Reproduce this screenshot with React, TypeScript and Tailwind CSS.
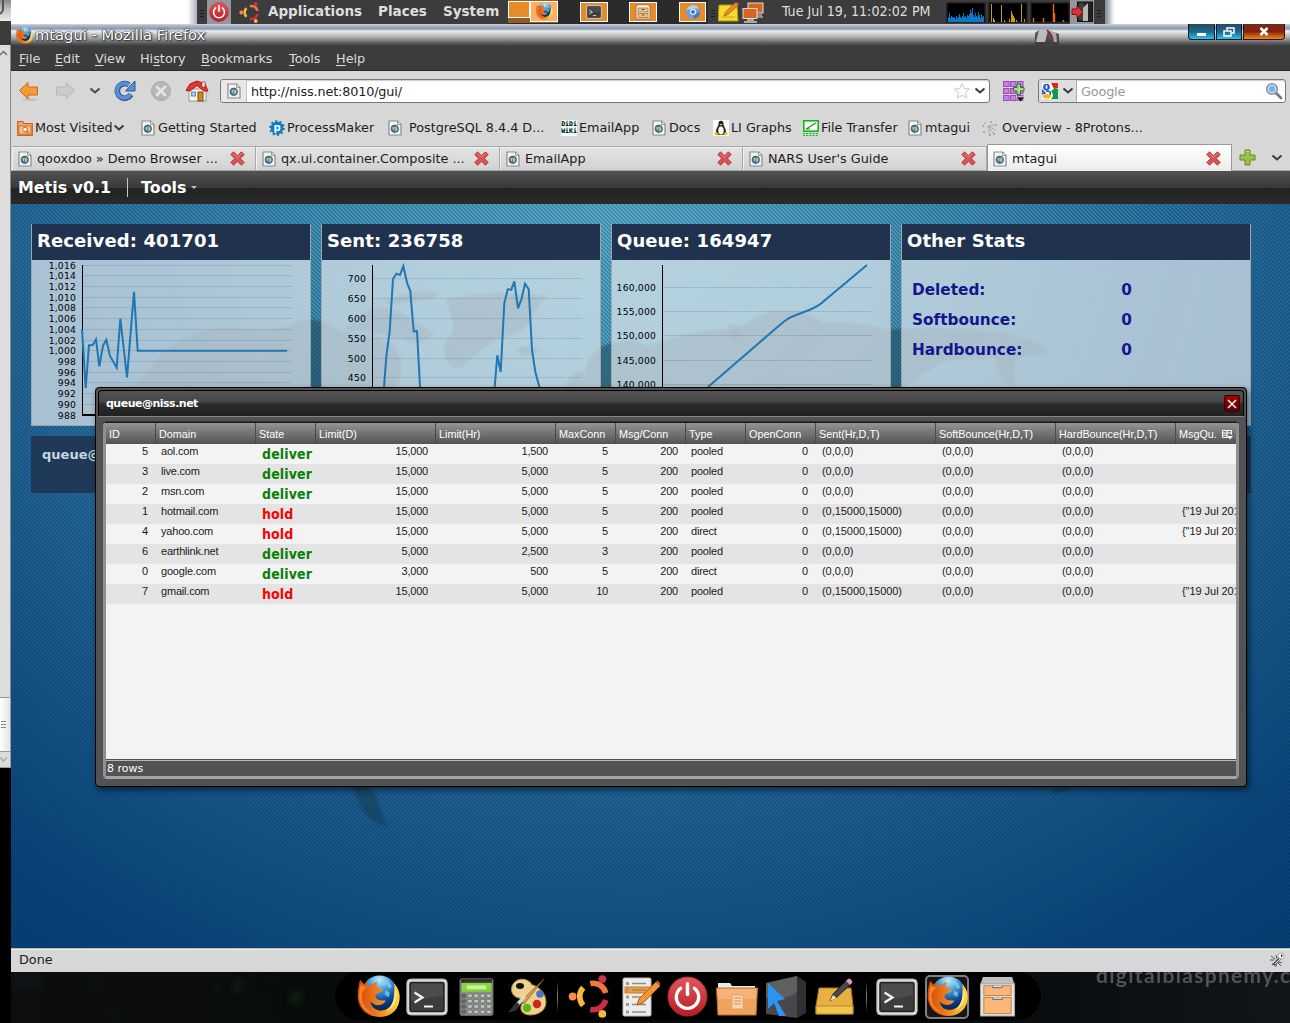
import React from "react";

/* ---------- small icons ---------- */

const DocIcon = () => (
  <svg width="14" height="16" viewBox="0 0 14 16" className="shrink-0">
    <path d="M1 1h8.500L13 4.500V15H1z" fill="#f3f3f3" stroke="#8a8a86" strokeWidth="1.200" strokeLinejoin="round" />
    <path d="M9.500 1v3.500H13" fill="#e4e4e0" stroke="#8a8a86" strokeWidth=".8" />
    <circle cx="6.800" cy="8.800" r="3.700" fill="#4a72ae" stroke="#2c4f84" strokeWidth=".8" />
    <path d="M4.400 7.500c1.500-1.600 2.700-.4 2.200.8S6 10.800 5 10.100zM7.400 6.600c1.400-.5 2.300.9 2 2.700s-1.700 2.400-2.300 1.500z" fill="#b8cf74" />
  </svg>
);

const CloseX = () => (
  <svg width="15" height="15" viewBox="0 0 15 15" className="shrink-0">
    <path d="M3.600.8 7.500 4.700 11.400.8 14.200 3.600 10.300 7.500 14.200 11.400 11.400 14.200 7.500 10.300 3.600 14.200.8 11.400 4.700 7.500.8 3.600z" fill="#d85455" stroke="#b43a3c" strokeWidth="1" strokeLinejoin="round" />
    <path d="M3.600 2.300 7.500 6.200l3.900-3.900" fill="none" stroke="#e88482" strokeWidth="1" />
  </svg>
);

const Chevron = ({ color = "#3a3a3a" }: { color?: string }) => (
  <svg width="12" height="8" viewBox="0 0 12 8" className="shrink-0">
    <path d="M1.500 1.500 6 5.500l4.500-4" fill="none" stroke={color} strokeWidth="2" />
  </svg>
);

const Firefox = ({ size }: { size: number }) => (
  <svg width={size} height={size} viewBox="0 0 42 42" className="shrink-0">
    <defs>
      <radialGradient id="ffGlobe" cx=".5" cy=".12" r=".8">
        <stop offset="0" stopColor="#c5ecfb" />
        <stop offset=".35" stopColor="#4fa6dc" />
        <stop offset=".75" stopColor="#0d4c9a" />
        <stop offset="1" stopColor="#052a66" />
      </radialGradient>
      <linearGradient id="ffTail" x1="0" y1="0" x2="1" y2="0">
        <stop offset="0" stopColor="#d9430a" />
        <stop offset=".55" stopColor="#f08a1c" />
        <stop offset="1" stopColor="#fbd84a" />
      </linearGradient>
    </defs>
    <circle cx="22" cy="17.500" r="17" fill="url(#ffGlobe)" />
    <path d="M26 4c4 1 7 4 8 8l-3 1-2-4-4 1zM28 15l4 2-1 5-4-3zM14 4l6-1-3 4z" fill="#8fd0f2" opacity=".7" />
    <path d="M36 8c6 6 6.500 13 5 19-2 8-9 14-19 14C11 41 2 34 .8 23 .3 16 1.500 10 3 5l4 4c1-1 2-2 3-2l1 4 9-5-1 5c1 2 4 3 7 3-1 2-3 3-6 4-2 1-3 3-1 5 2 2 5 2 9 2-1 3-5 5-9 4.500-2-.5-4-1.500-6-3.500 1 6 6 9.500 12 8.500 7-1.200 11-7 11-13 0-3 1-8 0-13.500z" fill="url(#ffTail)" />
    <path d="M4 8c0 3 2 3 6 4-4 2-6 6-5 11 0 6 5 12 11 15C7 36 2 29 2 21c0-5 1-9 2-13z" fill="#f7953a" opacity=".75" />
    <path d="M37.500 12c3 8 1 19-9 24 5-5 8.500-12 9-24z" fill="#fff09a" opacity=".8" />
  </svg>
);

const Ubuntu = ({ size }: { size: number }) => (
  <svg width={size} height={size} viewBox="0 0 42 42" className="shrink-0">
    <g fill="none" strokeWidth="5.500">
      <path d="M14.800 29.700A13 13 0 0 1 14.800 12.300" stroke="#f6b83c" />
      <path d="M21.800 8.300A13 13 0 0 1 36.900 17.500" stroke="#f0783c" />
      <path d="M36.900 24.500A13 13 0 0 1 21.800 33.700" stroke="#cc2c48" />
    </g>
    <circle cx="4.500" cy="21" r="3.800" fill="#f48c50" />
    <circle cx="33.500" cy="4" r="3.800" fill="#cc3450" />
    <circle cx="33.500" cy="38" r="3.800" fill="#f6b840" />
  </svg>
);

const Power = ({ size }: { size: number }) => (
  <svg width={size} height={size} viewBox="0 0 42 42" className="shrink-0">
    <defs>
      <linearGradient id="pw" x1="0" y1="0" x2="0" y2="1">
        <stop offset="0" stopColor="#e0585c" />
        <stop offset="1" stopColor="#b81c22" />
      </linearGradient>
    </defs>
    <circle cx="21" cy="21" r="20" fill="url(#pw)" stroke="#b03034" />
    <path d="M14 12.500a11.500 11.500 0 1 0 14 0" fill="none" stroke="#fff" strokeWidth="3.400" strokeLinecap="round" />
    <path d="M21 8v11" stroke="#fff" strokeWidth="3.600" strokeLinecap="round" />
  </svg>
);

const Terminal = ({ size }: { size: number }) => (
  <svg width={size} height={size} viewBox="0 0 42 42" className="shrink-0">
    <rect x=".8" y="3" width="40.400" height="36" rx="4" fill="#dcdcda" stroke="#a8a8a6" />
    <rect x="4" y="6.500" width="34" height="29" rx="1.500" fill="#3c3d3c" stroke="#222" strokeWidth="1.500" />
    <path d="M5 7.500h32v12L5 25z" fill="#fff" opacity=".08" />
    <path d="m8.500 16.500 8 5-8 5M18 30.500h9" fill="none" stroke="#f4f4f4" strokeWidth="2.200" />
  </svg>
);

const Cabinet = ({ size }: { size: number }) => (
  <svg width={size} height={size} viewBox="0 0 42 42" className="shrink-0">
    <path d="M6 1h30l2.500 8H3.500z" fill="#bfbfbd" />
    <rect x="3.500" y="8" width="35" height="33" fill="#e4e4e2" stroke="#a4a4a2" />
    <rect x="7" y="10" width="28" height="10" fill="#fbb678" stroke="#b98452" />
    <rect x="7" y="22" width="28" height="16.500" fill="#fbb678" stroke="#b98452" />
    <path d="M16 10v2h10v-2M16 22v2h10v-2" fill="#ddd" stroke="#666" />
  </svg>
);

const MiniCabinet = () => (
  <svg width="16" height="16" viewBox="0 0 16 16" className="shrink-0">
    <path d="M2.500.8h11L15 3v12H1V3z" fill="#f6f2ec" stroke="#9a6a38" strokeWidth=".8" />
    <rect x="3" y="4" width="10" height="4" fill="#f8c088" stroke="#a87440" strokeWidth=".8" />
    <rect x="3" y="9.500" width="10" height="4" fill="#f8c088" stroke="#a87440" strokeWidth=".8" />
    <path d="M6.500 5.500h3M6.500 11h3" stroke="#555" strokeWidth="1.200" />
  </svg>
);

const Star = () => (
  <svg width="18" height="18" viewBox="0 0 18 18">
    <path d="m9 1.500 2.200 4.900 5.300.6-4 3.500 1.100 5.500L9 13.300 4.400 16l1.100-5.500-4-3.500 5.300-.6z" fill="#fff" stroke="#c9c9c9" />
  </svg>
);

/* ---------- top desktop panel ---------- */

const cpu = [5, 9, 4, 6, 5, 4, 5, 3, 6, 4, 5, 8, 5, 4, 6, 9, 5, 6, 4, 7, 6, 8, 12, 9, 14, 7, 5, 9, 6, 5, 10, 7, 4, 8, 5, 6];
const Graph = ({ kind }: { kind: "cpu" | "net" | "disk" }) => (
  <svg width="40" height="21" viewBox="0 0 40 21" className="shrink-0">
    <rect x=".5" y=".5" width="39" height="20" fill="#000" stroke="#262626" strokeWidth="2" />
    {kind === "cpu" && cpu.map((h, i) => <rect key={i} x={2 + i} y={20 - h} width="1" height={h} fill="#0a78c8" />)}
    {kind === "net" && (
      <path d="M3.500 20V2M13.500 20V3M33.500 20V2M23.500 20V9M24.500 20v-8M25.500 20v-6M26.500 20v-4M5.500 20v-4M6.500 20v-2M16.500 20v-2M21.500 20v-3M28.500 20v-2M36.500 20v-3" stroke="#c8a000" strokeWidth="1" />
    )}
    {kind === "disk" && <path d="M3.500 20v-4M13.500 20v-4M23.500 20V2M24.500 20v-9M33.500 20v-2" stroke="#f46a0a" strokeWidth="1.400" />}
  </svg>
);

const Grip = () => (
  <svg width="4" height="10" viewBox="0 0 4 10" className="shrink-0">
    <path d="M0 1.500h4M0 4.500h4M0 7.500h4" stroke="#1d1d1d" />
  </svg>
);

const TopPanel = () => (
  <div className="flex h-6 w-full shrink-0 bg-white">
    <div className="h-6 w-[186px] bg-gradient-to-r from-white from-95% to-[#a9b0ba]" />
    <div className="flex h-6 w-[908px] items-center overflow-hidden bg-[#3c3c3c] font-['DejaVu_Sans'] text-[13.500px] font-bold whitespace-nowrap text-[#dedede]">
      <div className="flex w-[10px] justify-center pt-1"><Grip /></div>
      <div className="flex h-full w-6 items-center justify-center bg-[#96959c]"><Power size={20} /></div>
      <div className="flex w-[37px] justify-center pr-[1px]"><Ubuntu size={21} /></div>
      <div className="w-[110px] pb-px">Applications</div>
      <div className="w-[65px] pb-px">Places</div>
      <div className="w-[65px] pb-px">System</div>
      <div className="flex h-full w-[200px] items-start bg-[#2b2b2b]">
        <div className="flex h-[23px] w-[50px] bg-[#905c28] pt-px">
          <div className="h-[17px] w-[22px] border border-white bg-[#e68a2a]" />
          <div className="flex h-[21px] w-[28px] items-center justify-center border border-white bg-[#ffaf60]"><Firefox size={17} /></div>
        </div>
        <div className="mt-0.5 ml-[22px] flex h-5 w-[28px] items-center justify-center border border-white bg-[#e68a2a]"><Terminal size={16} /></div>
        <div className="mt-0.5 ml-[21px] flex h-5 w-[28px] items-center justify-center border border-white bg-[#e68a2a]"><MiniCabinet /></div>
        <div className="mt-0.5 ml-[22px] flex h-5 w-[27px] items-center justify-center border border-white bg-[#e68a2a]">
          <svg width="16" height="16" viewBox="0 0 16 16">
            <circle cx="8" cy="8" r="7" fill="#6fa0d8" />
            <path d="M1.500 6A7 7 0 0 1 14 4.500H8z" fill="#b8d2f0" />
            <path d="M8 15a7 7 0 0 0 6.800-8L9 12z" fill="#4478b8" />
            <circle cx="8" cy="7.800" r="3" fill="#e9f2fb" />
            <circle cx="8" cy="7.800" r="1.900" fill="#3a6fb4" />
          </svg>
        </div>
      </div>
      <div className="flex w-[10px] justify-center pt-1"><Grip /></div>
      <svg width="22" height="21" viewBox="0 0 22 21" className="shrink-0">
        <path d="M1 3h18l1 16H0z" fill="#f4dc2c" stroke="#b8920c" />
        <path d="M3 15h14" stroke="#c8a818" />
        <path d="m6 14 1.500-4L18 0l3 2.500L10 12.500z" fill="#e88a28" stroke="#a05010" strokeWidth=".7" />
        <path d="m17 1 1-1 3 2.500-1 1z" fill="#d84860" />
      </svg>
      <svg width="23" height="21" viewBox="0 0 23 21" className="ml-0.5 shrink-0">
        <rect x="6" y="1" width="15" height="10" fill="#d9641c" stroke="#ddd" />
        <path d="M12 13h8M11 15h10" stroke="#aaa" strokeWidth="1.500" />
        <rect x="1" y="6.500" width="14" height="10" fill="#d9641c" stroke="#ddd" />
        <path d="M5 18h7M2 20h13" stroke="#ccc" strokeWidth="1.500" />
      </svg>
      <div className="ml-[17px] w-[164px] pb-px font-['DejaVu_Sans_Condensed','DejaVu_Sans'] text-[14.100px] font-normal [font-stretch:condensed]">Tue Jul 19, 11:02:02 PM</div>
      <div className="flex gap-[2px]">
        <Graph kind="cpu" />
        <Graph kind="net" />
        <Graph kind="disk" />
      </div>
      <div className="flex h-full w-6 items-center justify-center bg-[#96959c]">
        <svg width="22" height="22" viewBox="0 0 22 22">
          <rect x="6.500" y="1" width="15" height="19.500" fill="#20241c" stroke="#111" />
          <path d="M8 2h5v17H8z" fill="#3c4438" />
          <path d="m12 7 5-5v18h-5z" fill="#b8b8b4" />
          <path d="M1 8h5V4.500L12 11l-6 6V13.500H1z" fill="#dc3238" stroke="#7c1014" />
        </svg>
      </div>
      <div className="flex w-[10px] justify-center pt-1"><Grip /></div>
    </div>
    <div className="h-6 flex-1 bg-gradient-to-r from-[#7f8894] to-white to-5%" />
  </div>
);

/* ---------- browser chrome ---------- */

const TitleBar = () => (
  <div className="flex h-[22px] shrink-0 items-center bg-[linear-gradient(180deg,#d2d8e2_0px,#a7b2c4_2px,#8e99ac_5px,#eef1f5_7px,#d8d8d8_9px,#a4a4a4_14px,#5c5c5c_19px,#3c3c3c_22px)]">
    <div className="ml-[5px] w-[18px]"><Firefox size={17} /></div>
    <div className="ml-px w-[175px] font-['DejaVu_Sans'] text-[14.700px] leading-5 whitespace-nowrap text-white [text-shadow:0_0_2px_#222,1px_1px_1px_#444,3px_0_0_#7f93b599,0_0_1px_#000]">mtagui - Mozilla Firefox</div>
    <svg width="24" height="16" viewBox="0 0 24 16" className="mt-1 ml-[825px] shrink-0">
      <path d="M0 4l4-3h8l12 4v10l-3 1H0z" fill="#3a3a3a" opacity=".8" />
      <path d="M4 1 1 13h9l3-12z" fill="#cfcfcf" opacity=".85" />
      <path d="m13 1 5 12h4L21 4z" fill="#a8a8a8" />
      <path d="M12 1c3 3 6 6 6 12" stroke="#8a1c22" strokeWidth="1.500" fill="none" />
    </svg>
    <div className="mb-[6px] ml-auto mr-[5px] flex h-[16px] gap-px">
      <div className="flex w-[27px] items-end justify-center rounded-bl-[4px] border border-t-0 border-[#0c1c2c] bg-gradient-to-b from-[#2a4866] via-[#1c6688] to-[#2bc5e8] pb-[3px]"><div className="h-[3px] w-[9px] bg-white" /></div>
      <div className="flex w-[26px] items-center justify-center border border-t-0 border-[#0c1c2c] bg-gradient-to-b from-[#2a4866] via-[#1c6688] to-[#2bc5e8]">
        <svg width="12" height="10" viewBox="0 0 12 10"><path d="M4 3V1h7v5H9M1 4h7v5H1z" fill="none" stroke="#fff" strokeWidth="1.500" /></svg>
      </div>
      <div className="flex w-[42px] items-center justify-center rounded-br-[4px] border border-t-0 border-[#311] bg-gradient-to-b from-[#6a2c20] via-[#8a2008] to-[#e88a20]">
        <svg width="10" height="9" viewBox="0 0 10 9"><path d="m1.500 1 7 7M8.500 1l-7 7" stroke="#fff" strokeWidth="2.600" /></svg>
      </div>
    </div>
  </div>
);

const menus: [string, string, string, string][] = [
  ["", "F", "ile", "w-[36px]"],
  ["", "E", "dit", "w-[40px]"],
  ["", "V", "iew", "w-[45px]"],
  ["Hi", "s", "tory", "w-[61px]"],
  ["", "B", "ookmarks", "w-[88px]"],
  ["", "T", "ools", "w-[47px]"],
  ["", "H", "elp", "w-[40px]"],
];

const MenuBar = () => (
  <div className="flex h-[25px] shrink-0 items-center border-b border-[#2a2a2a] bg-[#3c3c3c] pl-2 font-['DejaVu_Sans'] text-[12.800px] leading-[15px] text-[#dcdcdc]">
    {menus.map(([a, u, b, w]) => (
      <div key={u + b} className={`${w} whitespace-nowrap`}>
        {a}<span className="underline underline-offset-2">{u}</span>{b}
      </div>
    ))}
  </div>
);

const NavBar = () => (
  <div className="flex h-[40px] shrink-0 items-center bg-[#d7d7d7] pl-[7px] font-['DejaVu_Sans'] text-[12.800px]">
    <svg width="22" height="22" viewBox="0 0 22 22" className="shrink-0">
      <ellipse cx="12" cy="19.500" rx="8" ry="1.500" fill="#c2c2c2" />
      <path d="M1.500 10.500 10 2.500V7h9.500v8H10v4z" fill="#f59a36" stroke="#ce6a10" strokeLinejoin="round" />
    </svg>
    <svg width="22" height="22" viewBox="0 0 22 22" className="ml-[14px] shrink-0">
      <path d="M20.500 10.500 12 2.500V7H2.500v8H12v4z" fill="#cdcbc8" stroke="#b9b6b2" strokeLinejoin="round" />
    </svg>
    <div className="ml-[13px] flex"><Chevron color="#4a4a4a" /></div>
    <svg width="22" height="22" viewBox="0 0 22 22" className="ml-[13px] shrink-0">
      <path d="M15 5A7.300 7.300 0 1 0 17 14.500" fill="none" stroke="#2a5796" strokeWidth="5.600" />
      <path d="M15 5A7.300 7.300 0 1 0 16.800 14" fill="none" stroke="#5b8fd0" strokeWidth="3.800" />
      <path d="M21 1v10H11.500z" fill="#5b8fd0" stroke="#2a5796" strokeLinejoin="round" />
    </svg>
    <svg width="22" height="22" viewBox="0 0 22 22" className="ml-[14px] shrink-0">
      <circle cx="11" cy="11" r="9.500" fill="#b9b7b5" stroke="#aaa8a6" />
      <path d="m7 7 8 8M15 7l-8 8" stroke="#e6e6e4" strokeWidth="2.500" strokeLinecap="round" />
    </svg>
    <svg width="24" height="22" viewBox="0 0 24 22" className="ml-[13px] shrink-0">
      <rect x="4" y="9" width="17" height="12" fill="#f4f4f0" stroke="#999" />
      <path d="M1 10.500 5 4l7-3 8 3 3 7h-4l-7-5.500L5 11z" fill="#e83434" stroke="#b01818" strokeLinejoin="round" />
      <rect x="17" y="2" width="3" height="5" fill="#fff" stroke="#a33" strokeWidth=".8" />
      <rect x="13" y="12" width="5" height="9" fill="#cf8a1c" stroke="#7c4c08" />
      <rect x="6.500" y="12" width="4" height="4" fill="#a8ccf0" stroke="#5d88b8" />
    </svg>
    <div className="ml-[11px] flex h-6 w-[770px] shrink-0 items-center rounded-[3px] border border-[#777] bg-white shadow-[inset_0_1px_1px_#ccc]">
      <div className="flex h-full w-[26px] items-center justify-center rounded-l-[3px] border-r border-[#c4c4c4] bg-[#e8e8e8]"><DocIcon /></div>
      <div className="pt-px pl-1 tracking-[-0.150px] text-[#222]">http://niss.net:8010/gui/</div>
      <div className="ml-auto flex items-center gap-[3px] pr-[3px]"><Star /><Chevron /></div>
    </div>
    <svg width="22" height="22" viewBox="0 0 22 22" className="ml-[13px] shrink-0">
      {[0, 7, 14].map((y) => [0, 7, 14].map((x) => <rect key={`${x}-${y}`} x={x + 0.5} y={y + 1.5} width="5.500" height="5" fill="#c982dc" stroke="#9c48b8" />))}
      <path d="M14 4h3.500v3.500H21V11h-3.500v3.500H14V11h-3.500V7.500H14z" fill="#a4dc8c" stroke="#2f6a3c" />
      <path d="M13 17h9l-4.500 5z" fill="#111" stroke="#fff" strokeWidth=".6" />
    </svg>
    <div className="ml-[13px] flex h-6 w-[248px] shrink-0 items-center rounded-[3px] border border-[#777] bg-white shadow-[inset_0_1px_1px_#ccc]">
      <div className="flex h-full w-[38px] items-center gap-1 rounded-l-[3px] border-r border-[#aaa] bg-[#dedede] pl-[3px]">
        <svg width="16" height="16" viewBox="0 0 16 16" className="shrink-0">
          <rect width="16" height="16" fill="#fff" />
          <path d="M9 0h7v5l-4 1z" fill="#e8241c" />
          <path d="M9 8l4-3 3 1v10H9c3-3 2-5 0-8z" fill="#109a48" />
          <circle cx="4.500" cy="4" r="2.600" fill="#1c58c0" stroke="#1c58c0" strokeWidth="1.500" />
          <ellipse cx="4.500" cy="4" rx="1" ry="2" fill="#fff" />
          <path d="M0 7l3 3-3 1zM4 8c4 0 5 1 4 4" stroke="#1c58c0" strokeWidth="1.500" fill="none" />
          <ellipse cx="4.800" cy="13.300" rx="4" ry="2.300" fill="#f8b818" />
        </svg>
        <Chevron />
      </div>
      <div className="pt-px pl-1 tracking-[-0.150px] text-[#989898]">Google</div>
      <svg width="18" height="18" viewBox="0 0 18 18" className="ml-auto mr-0.5">
        <path d="m11 11 5 5" stroke="#777" strokeWidth="2.800" strokeLinecap="round" />
        <circle cx="7" cy="7" r="5.300" fill="#9cc4f0" stroke="#8a8f96" strokeWidth="1.500" />
        <circle cx="7" cy="7" r="3.900" fill="#7fb2ea" stroke="#e6f1fc" strokeWidth=".8" />
      </svg>
    </div>
  </div>
);

const FolderIcon = () => (
  <svg width="16" height="16" viewBox="0 0 16 16" className="shrink-0">
    <path d="M.7 1.500h5l1 2h8.600v11.800H.7z" fill="#f6a868" stroke="#c8641c" strokeWidth="1.200" />
    <path d="M2 6h12v8H2z" fill="#f9c28e" stroke="#d0742c" />
    <circle cx="8" cy="9.500" r="2.300" fill="#fff" stroke="#c8641c" />
    <path d="m9.500 11 2 2" stroke="#c8641c" strokeWidth="1.400" />
  </svg>
);
const GearIcon = () => (
  <svg width="16" height="16" viewBox="0 0 16 16" className="shrink-0">
    <circle cx="8" cy="8" r="6.300" fill="#0f7cc4" />
    <circle cx="8" cy="8" r="6.800" fill="none" stroke="#0f7cc4" strokeWidth="2" strokeDasharray="2.200 2.070" />
    <text x="4.500" y="10.800" fontFamily="DejaVu Sans" fontWeight="bold" fontSize="10" fill="#fff">p</text>
  </svg>
);
const DidiIcon = () => (
  <div className="flex h-4 w-4 shrink-0 flex-col items-center justify-center overflow-hidden bg-[#e6ffff] font-['DejaVu_Sans_Mono'] text-[6.500px] leading-[7px] font-bold text-black">
    <span>DiDi</span>
    <span>WiKi</span>
  </div>
);
const TuxIcon = () => (
  <svg width="16" height="16" viewBox="0 0 16 16" className="shrink-0">
    <rect width="16" height="16" fill="#fff" />
    <path d="M8 .8c2 0 2.600 1.600 2.500 3.400C10.400 6 13 8 13 12l-2 3H5l-2-3c0-4 2.600-6 2.500-7.800C5.400 2.400 6 .8 8 .8z" fill="#222" />
    <ellipse cx="8" cy="10.500" rx="2.700" ry="4" fill="#fff" />
    <path d="M6.500 4.300 8 3.700l1.600.6L8 5.800z" fill="#f0b020" />
    <path d="M.8 14 3 11.500l3 3-1 1.300zM15.200 14 13 11.500l-3 3 1 1.300z" fill="#f0b820" />
  </svg>
);
const GraphIcon = () => (
  <svg width="16" height="16" viewBox="0 0 16 16" className="shrink-0">
    <rect x=".8" y=".8" width="14.400" height="10.400" fill="#fff" stroke="#14b414" strokeWidth="1.600" />
    <path d="M3 9 13 3M3 9h4" stroke="#119a11" strokeWidth="1.200" />
    <path d="M0 13.500h16M0 15.500h16" stroke="#14b414" strokeDasharray="2 1.200" />
  </svg>
);
const ProtonIcon = () => (
  <svg width="16" height="16" viewBox="0 0 16 16" className="shrink-0">
    <g stroke="#999" strokeWidth=".8"><path d="M6 6 12 14M6 6l8 4M6 6l2 9M6 6l8-1" strokeDasharray="3 .6" /></g>
    <g fill="#777"><circle cx="1.500" cy="6" r=".8" /><circle cx="9" cy="2" r=".8" /><circle cx="14" cy="5" r=".8" /><circle cx="12" cy="14" r=".8" /><circle cx="2" cy="12" r=".8" /><circle cx="8" cy="15" r=".8" /></g>
    <circle cx="3" cy="3" r=".9" fill="#e0a070" />
  </svg>
);

const bookmarks: [React.ReactNode, string, string, string][] = [
  [<FolderIcon />, "Most Visited", "w-[124px]", "pl-0.5"],
  [<DocIcon />, "Getting Started", "w-[128px]", "pl-[3px]"],
  [<GearIcon />, "ProcessMaker", "w-[119px]", "pl-0.5"],
  [<DocIcon />, "PostgreSQL 8.4.4 D...", "w-[173px]", "pl-[7px]"],
  [<DidiIcon />, "EmailApp", "w-[91px]", "pl-0.5"],
  [<DocIcon />, "Docs", "w-[61px]", "pl-[3px]"],
  [<TuxIcon />, "LI Graphs", "w-[90px]", "pl-0.5"],
  [<GraphIcon />, "File Transfer", "w-[105px]", "pl-0.5"],
  [<DocIcon />, "mtagui", "w-[74px]", "pl-[3px]"],
  [<ProtonIcon />, "Overview - 8Protons...", "w-[170px]", "pl-[4px]"],
];

const BookmarksBar = () => (
  <div className="flex h-[35px] shrink-0 items-center bg-[#d7d7d7] pb-px pl-[6px] font-['DejaVu_Sans'] text-[12.750px] text-[#1c1c1c]">
    {bookmarks.map(([icon, label, w, pad], i) => (
      <div key={i} className={`${w} flex shrink-0 items-center whitespace-nowrap`}>
        {icon}
        <span className={`${pad} pb-px`}>{label}</span>
        {i === 0 && <Chevron />}
      </div>
    ))}
  </div>
);

const tabs: [string, string][] = [
  ["qooxdoo » Demo Browser ...", "w-[244px]"],
  ["qx.ui.container.Composite ...", "w-[244px]"],
  ["EmailApp", "w-[243px]"],
  ["NARS User's Guide", "w-[244px]"],
];

const TabBar = () => (
  <div className="flex h-[25px] shrink-0 items-end bg-[#d7d7d7] pl-px font-['DejaVu_Sans'] text-[12.800px] text-[#1c1c1c]">
    {tabs.map(([t, w]) => (
      <div key={t} className={`${w} flex h-[25px] shrink-0 items-center border-t border-r border-b border-[#a8a8a8] bg-gradient-to-b from-[#e4e4e4] to-[#d2d2d2] pr-[10px] pl-[6px] whitespace-nowrap shadow-[inset_1px_1px_0_#f0f0f0]`}>
        <DocIcon /><span className="pt-px pl-[5px]">{t}</span><span className="ml-auto"><CloseX /></span>
      </div>
    ))}
    <div className="-mt-[2px] flex h-[27px] w-[245px] shrink-0 items-center border border-b-0 border-[#999] bg-gradient-to-b from-white to-[#ececec] pt-px pr-[10px] pl-[5px] whitespace-nowrap">
      <DocIcon /><span className="pl-[5px]">mtagui</span><span className="ml-auto"><CloseX /></span>
    </div>
    <div className="flex h-[25px] flex-1 items-center border-b border-[#a8a8a8] pl-[7px]">
      <svg width="17" height="17" viewBox="0 0 17 17" className="mb-0.5">
        <path d="M6 1h5v5h5v5h-5v5H6v-5H1V6h5z" fill="#9ac24a" stroke="#5d8a1c" strokeLinejoin="round" />
        <path d="M7 2.500h3" stroke="#d0e898" />
      </svg>
      <div className="ml-[15px] flex"><Chevron /></div>
    </div>
  </div>
);

/* ---------- dashboard ---------- */

const series = { fill: "none", stroke: "#1f77b4", strokeWidth: 2 } as const;

const Labels = ({ x, items }: { x: number; items: [string, number][] }) => (
  <g fontFamily="DejaVu Sans" fontSize="9.200" letterSpacing=".2" fill="#000" textAnchor="end">
    {items.map(([t, y]) => <text key={t} x={x} y={y + 3.5}>{t}</text>)}
  </g>
);
const Grid = ({ x, ys }: { x: number; ys: number[] }) => (
  <path d={ys.map((y) => `M${x} ${y}h210`).join("")} stroke="#000" strokeOpacity=".11" />
);

const recv: [string, number][] = [["1,016", 5.5], ["1,014", 15.5], ["1,012", 26.5], ["1,010", 37.5], ["1,008", 47.5], ["1,006", 58.5], ["1,004", 69.5], ["1,002", 80.5], ["1,000", 90.5], ["998", 101.5], ["996", 112.5], ["994", 122.5], ["992", 133.5], ["990", 144.5], ["988", 155.5]];
const sent: [string, number][] = [["700", 18.5], ["650", 38.5], ["600", 58.5], ["550", 78.5], ["500", 98.5], ["450", 117.5]];
const queue: [string, number][] = [["160,000", 27.5], ["155,000", 51.5], ["150,000", 75.5], ["145,000", 100.5], ["140,000", 124.5]];

const Card = ({ title, wide, children }: { title: string; wide?: boolean; children: React.ReactNode }) => (
  <div className={`${wide ? "w-[350px]" : "w-[280px]"} h-[202px] shrink-0 overflow-hidden border border-t-0 border-[#a3a6a8] bg-[#e2eaf0b3]`}>
    <div className="h-9 bg-[#20324e] pl-[5px] font-['DejaVu_Sans'] text-[18px] leading-[34px] font-bold tracking-[0.100px] text-white">{title}</div>
    {children}
  </div>
);

const WorldMap = () => (
  <svg width="1279" height="744" viewBox="11 204 1279 744" className="absolute top-0 left-0 blur-[1.200px]">
    <g fill="#16333f" fillOpacity=".4">
      <path d="M128 388c14-6 20-20 30-30 12-12 22-22 50-28 25-6 50 4 82-4 10-10 30-8 44 2 15 8 32 4 50 12 20 10 22 30 12 48H128z" />
      <path d="M345 330c12-14 22-24 40-22 20 4 34 16 50 26l-16 10c-20-6-40-12-74-14z" />
      <path d="M382 302c16-8 34-10 48-10 10 0 10 4-2 7-16 2-32 8-46 3z" />
      <path d="M446 300c18-6 60-10 100-4-12 14-16 30-26 36-24 6-44 20-56 34-8 8-20-4-20-16 2-16 14-16 8-30-2-8-4-12-6-20z" />
      <path d="M515 350c8-6 20-4 24 0-4 6-18 8-24 0z" />
      <path d="M565 388c4-12 10-16 20-16l4 16zM586 370c0-14 16-26 30-28 14-4 22-2 30 4 30-8 60-20 88-16l14-8c12-10 28-12 50-10 20 2 18 8 24 10 20 0 50 2 66 8 34-4 90-2 120 4 18 4 40 10 42 18-14 4-28 2-34 8-4 10 2 20-4 28-14-10-12-22-18-30-30 2-50 0-60 10-20 8-20 20-40 20H586z" />
      <path d="M728 326c4-4 10-2 12 4s-4 12-8 8z" />
      <path d="M350 780c10 4 20 8 24 12 4 8 4 18 14 34-20-2-26-16-30-26-4-8-8-14-8-20z" />
      <path d="M1050 794c6-6 16-10 24-12-2 8-14 12-24 12z" />
    </g>
  </svg>
);

const stats = ["Deleted:", "Softbounce:", "Hardbounce:"];

const Dashboard = () => (
  <div className="relative h-[744px] shrink-0 overflow-hidden bg-[radial-gradient(ellipse_1000px_900px_at_610px_-10px,#57abc9_0%,#4497b9_25%,#276f9f_55%,#17598c_75%,#054179_96%,#023b73_110%)]">
    <div className="absolute inset-0 bg-[repeating-linear-gradient(45deg,#00284c40_0px,#00284c40_1.200px,#ffffff08_1.600px,#ffffff08_2.828px)]" />
    <WorldMap />
    <div className="relative flex flex-col gap-[10px] pt-5 pl-5">
      <div className="flex gap-[10px]">
        <Card title="Received: 401701">
          <svg width="278" height="166" viewBox="32 0 278 166">
            <Grid x={82} ys={recv.map((r) => r[1])} />
            <Labels x={76} items={recv} />
            <path d="M82.500 5v151" stroke="#000" />
            <path d="M82 155h210" stroke="#000" strokeWidth="2" />
            <path {...series} d="M82 69.300 85.700 128 89 85.300 92.700 85 96 79.300 99.300 106.300 103 85.700 106.300 80 110 96 116.700 107.700 120.300 58.700 123.700 88 127 117.300 134 31.700 137.700 90.700H287" />
          </svg>
        </Card>
        <Card title="Sent: 236758">
          <svg width="278" height="166" viewBox="322 0 278 166">
            <Grid x={372} ys={sent.map((r) => r[1])} />
            <Labels x={366} items={sent} />
            <path d="M372.500 5v151" stroke="#000" />
            <path {...series} d="M382 150 384 127 386.300 96.700 389.700 71 393 19 396.300 13.700 400 15 403.300 6 407 22.700 410.300 31 413.700 71.300 417 71 420 126.700 424 150M490 150 494.700 126.700 497.300 95.300 500.700 112 504.300 43.300 507.700 29.300 511.300 29.700 514.300 21.300 518 48.300 521.700 38.300 525 23.700 528.700 29.300 532 90 535.300 111.700 539.300 126.700 545 150" />
          </svg>
        </Card>
        <Card title="Queue: 164947">
          <svg width="278" height="166" viewBox="612 0 278 166">
            <Grid x={662} ys={queue.map((r) => r[1])} />
            <Labels x={656} items={queue} />
            <path d="M662.500 5v151" stroke="#000" />
            <path {...series} d="M680 151 708.300 126.700 776 68.300 784 61.500Q789 57.500 796 55L808 50.500Q819 46 824 41L867 5" />
          </svg>
        </Card>
        <Card title="Other Stats" wide>
          <div className="flex w-[230px] flex-col pt-[15px] pl-[10px] font-['DejaVu_Sans'] text-[15.300px] leading-[30px] font-bold text-[#15158c]">
            {stats.map((s) => (
              <div key={s} className="flex justify-between"><span>{s}</span><span>0</span></div>
            ))}
          </div>
        </Card>
      </div>
      <div className="h-[57px] w-[1220px] bg-[#20324ed9] pt-[9px] pl-[11px] font-['DejaVu_Sans'] text-[13px] font-bold text-[#c9d6e0]"><div className="w-[53px] overflow-hidden">queue@</div></div>
    </div>
  </div>
);

/* ---------- queue window ---------- */

const cols: [string, string][] = [
  ["ID", "w-[50px]"], ["Domain", "w-[100px]"], ["State", "w-[60px]"], ["Limit(D)", "w-[120px]"], ["Limit(Hr)", "w-[120px]"],
  ["MaxConn", "w-[60px]"], ["Msg/Conn", "w-[70px]"], ["Type", "w-[60px]"], ["OpenConn", "w-[70px]"], ["Sent(Hr,D,T)", "w-[120px]"],
  ["SoftBounce(Hr,D,T)", "w-[120px]"], ["HardBounce(Hr,D,T)", "w-[120px]"], ["MsgQu.", "w-[60px]"],
];
const numeric = new Set([0, 3, 4, 5, 6, 8]);
const words = new Set([1, 7]);
const cellClass = (i: number) =>
  numeric.has(i) ? "pr-[8px] text-right tracking-[-0.200px]" : words.has(i) ? "pl-[5px] tracking-[-0.200px]" : "pl-[6px] tracking-[-0.050px]";
const q = '{"19 Jul 2011';
const rows: string[][] = [
  ["5", "aol.com", "deliver", "15,000", "1,500", "5", "200", "pooled", "0", "(0,0,0)", "(0,0,0)", "(0,0,0)", ""],
  ["3", "live.com", "deliver", "15,000", "5,000", "5", "200", "pooled", "0", "(0,0,0)", "(0,0,0)", "(0,0,0)", ""],
  ["2", "msn.com", "deliver", "15,000", "5,000", "5", "200", "pooled", "0", "(0,0,0)", "(0,0,0)", "(0,0,0)", ""],
  ["1", "hotmail.com", "hold", "15,000", "5,000", "5", "200", "pooled", "0", "(0,15000,15000)", "(0,0,0)", "(0,0,0)", q],
  ["4", "yahoo.com", "hold", "15,000", "5,000", "5", "200", "direct", "0", "(0,15000,15000)", "(0,0,0)", "(0,0,0)", q],
  ["6", "earthlink.net", "deliver", "5,000", "2,500", "3", "200", "pooled", "0", "(0,0,0)", "(0,0,0)", "(0,0,0)", ""],
  ["0", "google.com", "deliver", "3,000", "500", "5", "200", "direct", "0", "(0,0,0)", "(0,0,0)", "(0,0,0)", ""],
  ["7", "gmail.com", "hold", "15,000", "5,000", "10", "200", "pooled", "0", "(0,15000,15000)", "(0,0,0)", "(0,0,0)", q],
];

const QueueWindow = () => (
  <div className="absolute top-[387px] left-[95px] flex h-[400px] w-[1152px] flex-col rounded-[4px] border border-black bg-[#525252] px-[2px] pt-[2px] shadow-[2px_3px_6px_#0008]">
    <div className="flex h-[26px] shrink-0 items-center rounded-t-[4px] border border-b-0 border-black bg-[linear-gradient(180deg,#535353,#484848_40%,#2c2c2c_55%,#202020)] pr-[3px] pl-[7px] shadow-[0_1px_0_#858585]">
      <div className="pb-px font-['DejaVu_Sans'] text-[11px] leading-[13px] font-bold tracking-[-0.500px] text-white">queue@niss.net</div>
      <div className="ml-auto flex h-[17px] w-4 items-center justify-center rounded-[2px] border border-[#3c0000] bg-gradient-to-b from-[#a80000] to-[#560000]">
        <svg width="10" height="10" viewBox="0 0 10 10"><path d="m1 1 8 8M9 1 1 9" stroke="#fff" strokeWidth="1.500" /></svg>
      </div>
    </div>
    <div className="mx-[5px] mt-[6px] flex h-[357px] shrink-0 flex-col rounded-[4px] border-x-[3px] border-t border-b-[3px] border-[#8f8f8f] border-t-[#1c1c1c] border-b-[#a4a4a4] shadow-[0_-1px_0_#333]">
      <div className="flex min-h-0 flex-1 flex-col overflow-hidden rounded-t-[3px] bg-[#f3f3f3] font-['Liberation_Sans'] text-[11px] text-[#1a1a1a]">
        <div className="flex h-[21px] shrink-0 bg-gradient-to-b from-[#969494] to-[#535353] text-[10.800px] text-white">
          {cols.map(([c, w], i) => (
            <div key={c} className={`${w} flex shrink-0 items-center pt-[2px] pl-[3px] whitespace-nowrap ${i < 12 ? "border-r border-[#4a4a4a]" : ""}`}>
              {c}
              {i === 12 && (
                <svg width="11" height="10" viewBox="0 0 11 10" className="ml-[5px] shrink-0">
                  <path d="M.5.5h9v4M.5.5v7h5M.5 3h9M5 .5v7M.5 5.200h5" fill="none" stroke="#fff" />
                  <path d="M5 6h6L8 9.500z" fill="#fff" />
                </svg>
              )}
            </div>
          ))}
        </div>
        {rows.map((r, ri) => (
          <div key={r[0]} className={`flex h-5 shrink-0 ${ri % 2 ? "bg-[#e4e4e4]" : "bg-[#f3f3f3]"}`}>
            {r.map((c, i) =>
              i === 2 ? (
                <div key={i} className={`${cols[i][1]} shrink-0 pl-[6px] font-['DejaVu_Sans_Condensed','DejaVu_Sans'] text-[14px] leading-5 font-bold tracking-[0.120px] [font-stretch:condensed] ${c === "hold" ? "text-[#fa0000]" : "text-[#078007]"}`}>{c}</div>
              ) : (
                <div key={i} className={`${cols[i][1]} shrink-0 overflow-hidden leading-[15px] whitespace-nowrap ${cellClass(i)}`}>{c}</div>
              ),
            )}
          </div>
        ))}
      </div>
      <div className="h-[17px] shrink-0 border-t border-[#4d4d4d] bg-[#525252] pl-px font-['DejaVu_Sans'] text-[11px] leading-[17px] text-white shadow-[inset_0_1px_0_#b8b8b8]">8 rows</div>
    </div>
  </div>
);

/* ---------- dock ---------- */

const Dock = () => (
  <div className="relative flex h-[51px] shrink-0 overflow-hidden bg-[linear-gradient(90deg,#0c0f0e,#060a08_40%,#05080a_70%,#12161b)]">
    <svg width="330" height="51" viewBox="0 0 330 51" className="absolute top-0 left-0 blur-[3px]">
      <g fill="#17301a" opacity=".6">
        <path d="M226 5l6 8-4 6-8 2zM258 6l4 4-5 2zM284 18l8 6-6 8-8-4z" />
        <path d="M80 6l6 6-4 6zM100 38l8 4-5 6zM205 10l4 8-7 6z" opacity=".6" />
      </g>
      <path d="M0 0h30v18H0z" fill="#141c26" opacity=".4" />
    </svg>
    <div className="ml-[324px] flex h-[48px] w-[706px] items-center rounded-r-[24px] rounded-l-[24px] bg-black pt-px pl-[22px]">
      <div className="w-[49px]"><Firefox size={43} /></div>
      <div className="w-[53px]"><Terminal size={42} /></div>
      <svg width="35" height="40" viewBox="0 0 36 40" className="mr-[14px] shrink-0">
        <rect x="1" y="1" width="34" height="38" rx="2" fill="#8a8c8a" stroke="#666" />
        <rect x="2" y="1" width="32" height="4.500" fill="#333" />
        <rect x="3" y="5.500" width="30" height="9" fill="#86d838" />
        <rect x="8" y="8" width="20" height="4" fill="#c8f29a" />
        {[17, 22.5, 28, 33.5].map((y) => [2.5, 9, 15.5, 22, 28.5].map((x) => <rect key={`${x}-${y}`} x={x} y={y} width="4.500" height="3.500" rx=".6" fill={x === 2.5 ? "#666" : "#c6c8c4"} stroke="#5c5e5c" strokeWidth=".6" />))}
      </svg>
      <svg width="40" height="40" viewBox="0 0 40 40" className="shrink-0">
        <path d="M8 4c6-4 14-1 16 4 3 0 14 6 14 17 0 8-7 13-16 13-8 0-11-6-8-11 2-4-2-6-6-7-6-3-6-12 0-16z" fill="#ecd28c" stroke="#b48e3c" />
        <ellipse cx="12" cy="9" rx="4" ry="3" fill="#111" />
        <circle cx="32" cy="17" r="3.800" fill="#4a74c4" />
        <circle cx="29" cy="27" r="4.200" fill="#d02020" />
        <circle cx="19" cy="31" r="4.200" fill="#58b818" />
        <path d="M36 2 16 27l-3-3z" fill="#d8a050" stroke="#7c5420" strokeWidth=".7" />
        <path d="m18 20-7 9-3-3 8-8z" fill="#d8d8d8" />
        <path d="m9 25 3 3c-2 5-6 7-12 7 4-2 4-7 9-10z" fill="#333" />
      </svg>
      <div className="mx-[9px] h-8 w-px bg-gradient-to-b from-transparent via-[#888] to-transparent" />
      <div className="ml-px w-[54px]"><Ubuntu size={43} /></div>
      <svg width="38" height="42" viewBox="0 0 38 42" className="shrink-0">
        <rect x="1" y="2" width="28" height="38" rx="1.500" fill="#ececea" stroke="#bbb" />
        <rect x="3" y="11" width="26" height="6" fill="#f39c38" stroke="#d87814" />
        <g stroke="#8c8c8c" strokeWidth="1.400"><path d="M10 7.500h14M10 14h14M10 21h14M10 28.500h14M10 36h14" /></g>
        <g fill="#999"><rect x="4" y="6" width="3" height="3" /><rect x="4" y="12.500" width="3" height="3" /><rect x="4" y="19.500" width="3" height="3" /><rect x="4" y="27" width="3" height="3" /><rect x="4" y="34.500" width="3" height="3" /></g>
        <path d="m15 29 2-6L34 6l4 4-17 17z" fill="#ee9638" stroke="#a85c10" />
        <path d="m34 6 1.500-1.500 3 3L38 10z" fill="#d8485c" />
      </svg>
      <div className="ml-[7px] w-[49px]"><Power size={41} /></div>
      <svg width="42" height="36" viewBox="0 0 42 36" className="mt-1 shrink-0">
        <path d="M2 2h12l2 3h23v10H2z" fill="#e9e9e9" />
        <path d="M.5 7h41L40 34H2z" fill="#f0a35c" stroke="#c07428" />
        <path d="M1.500 8h39l-.6 10H2z" fill="#f9be88" opacity=".6" />
        <rect x="16" y="14" width="11" height="14" fill="#f9d5b0" stroke="#e0a468" />
        <path d="M18 17h7M18 20h7M18 23h7" stroke="#d08c48" />
      </svg>
      <svg width="42" height="42" viewBox="0 0 42 42" className="ml-[7px] shrink-0">
        <path d="M1 7 32 0v42L1 38z" fill="#48484a" />
        <path d="m32 0 9 6v31l-9 5z" fill="#303032" />
        <path d="M1 7 32 0v16C22 24 10 22 1 22z" fill="#777" opacity=".5" />
        <path d="m3 7 17 16-8 2 9 15h-7L9 27l-6 6z" fill="#2c94f4" />
      </svg>
      <svg width="40" height="38" viewBox="0 0 40 38" className="ml-[8px] shrink-0">
        <path d="M4 10h32l2 18v8H1v-8z" fill="#e8b040" stroke="#a8781c" />
        <path d="M1 28h37v8H1z" fill="#f2c64c" stroke="#b8862c" />
        <path d="m15 23 3-7L31 3l4 4-13 12z" fill="#4a4a4a" stroke="#222" />
        <path d="m31 3 2-2c2-1 5 2 4 4l-2 2z" fill="#e898b8" />
        <path d="m15 23 3-6 3.500 3z" fill="#f4e2b0" />
      </svg>
      <div className="mr-[9px] ml-[11px] h-8 w-px bg-gradient-to-b from-transparent via-[#888] to-transparent" />
      <div className="w-[49px]"><Terminal size={42} /></div>
      <div className="mr-[8px] flex h-[44px] w-[44px] items-center justify-center rounded-[5px] border-2 border-[#808080] bg-[#161616]"><Firefox size={41} /></div>
      <Cabinet size={41} />
    </div>
    <div className="absolute -top-[9px] left-[1085px] font-['Lato','DejaVu_Sans'] text-[21px] leading-[24px] font-bold tracking-[1.300px] whitespace-nowrap text-[#505358] blur-[.7px]">digitalblasphemy.com</div>
  </div>
);

/* ---------- page ---------- */

const LeftSliver = () => (
  <div className="flex h-[1023px] w-[11px] shrink-0 flex-col bg-black">
    <div className="relative h-[21px] shrink-0 overflow-hidden bg-gradient-to-b from-[#8a8a8a] via-[#c8c8c8] to-[#ececec]">
      <div className="absolute -left-2 h-[15px] w-[12px] rounded-br-[6px] border-r-2 border-b-2 border-[#555]" />
    </div>
    <div className="h-[24px] shrink-0 bg-[#3c3c3c]" />
    <div className="h-[652px] shrink-0 border-r border-[#8a8a8a] bg-[#dedede] pt-1">
      <svg width="10" height="8" viewBox="0 0 10 8"><path d="M0 6 3.500 2.500 7 6" fill="none" stroke="#666" strokeWidth="1.300" /></svg>
    </div>
    <div className="flex h-[55px] shrink-0 items-center border-y border-r border-[#999] bg-gradient-to-r from-white to-[#e4e4e4]">
      <svg width="8" height="8" viewBox="0 0 8 8"><path d="M1 .5h5M1 3.500h5M1 6.500h5" stroke="#888" /></svg>
    </div>
    <div className="h-4 shrink-0 border-r border-b border-[#999] bg-[#dcdcdc] pt-1">
      <svg width="10" height="8" viewBox="0 0 10 8"><path d="m0 1.500 3.500 3.500L7 1.500" fill="none" stroke="#aaa" strokeWidth="1.300" /></svg>
    </div>
  </div>
);

export default function App() {
  return (
    <div className="relative flex h-[1023px] w-[1290px] overflow-hidden bg-black">
      <LeftSliver />
      <div className="flex w-[1279px] flex-col">
        <TopPanel />
        <TitleBar />
        <MenuBar />
        <NavBar />
        <BookmarksBar />
        <TabBar />
        <div className="flex h-[33px] shrink-0 items-center bg-[linear-gradient(180deg,#535353,#383838_50%,#232323_52%,#2a2a2a)] pl-[7px] font-['DejaVu_Sans'] text-[15.900px] font-bold text-white">
          <span className="w-[109px]">Metis v0.1</span>
          <span className="h-[19px] w-px bg-[#c8c8c8]" />
          <span className="pl-[13px]">Tools</span>
          <span className="ml-[5px] border-x-[3px] border-t-[3px] border-x-transparent border-t-[#bbb]" />
        </div>
        <Dashboard />
        <div className="flex h-6 shrink-0 items-center justify-between border-t border-[#bcbcbc] bg-[#d7d7d7] pr-1 pb-px pl-2 font-['DejaVu_Sans'] text-[12.800px] text-[#1c1c1c] shadow-[inset_0_1px_0_#eee]">
          <span className="pb-px">Done</span>
          <svg width="18" height="18" viewBox="0 0 18 18">
            <path d="M2 9h4M4 14l3-2M8 16v-3M8 4l1 4M3 5l4 3M14 12l-4-1M13 15l-3-3" stroke="#555" />
            <path d="m4 13 6-7 3 2-6 7z" fill="#555" />
            <path d="m5 12 5-5M7 13l5-5" stroke="#ddd" />
            <circle cx="13" cy="5" r="3" fill="#fff" stroke="#777" strokeWidth=".6" />
            <path d="m13 3 2 2-2 1z" fill="#111" />
          </svg>
        </div>
        <Dock />
      </div>
      <QueueWindow />
    </div>
  );
}
